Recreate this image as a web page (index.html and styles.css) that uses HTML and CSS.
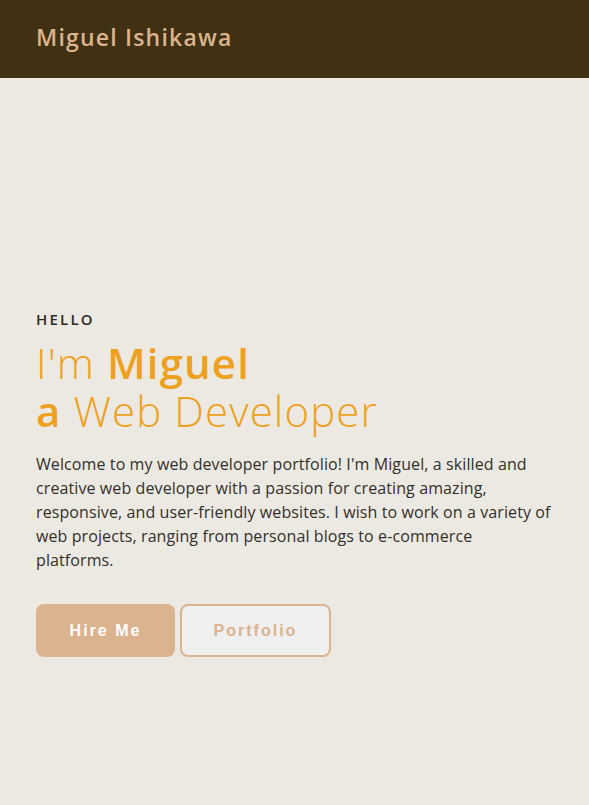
FILE: index.html
```html
<!DOCTYPE html>
<html lang="en">
<head>
<meta charset="utf-8">
<title>Miguel Ishikawa</title>
<link rel="stylesheet" href="styles.css">
</head>
<body>
<header class="site-header">
  <div class="brand">Miguel Ishikawa</div>
</header>
<main class="hero">
  <div class="hero-inner">
    <p class="eyebrow">HELLO</p>
    <h1 class="title"><span class="line">I'm <strong>Miguel</strong></span><span class="line"><strong>a</strong> Web Developer</span></h1>
    <p class="intro">Welcome to my web developer portfolio! I'm Miguel, a skilled and<br>creative web developer with a passion for creating amazing,<br>responsive, and user-friendly websites. I wish to work on a variety of<br>web projects, ranging from personal blogs to e-commerce<br>platforms.</p>
    <div class="actions">
      <button class="btn btn-primary">Hire Me</button>
      <button class="btn btn-outline">Portfolio</button>
    </div>
  </div>
</main>
</body>
</html>
```
FILE: styles.css
```css
html, body {
  margin: 0;
  padding: 0;
}
body {
  background: #ece9e2;
  font-family: "Open Sans", "Noto Sans", sans-serif;
  width: 589px;
  height: 805px;
  overflow: hidden;
}
.site-header {
  background: #403112;
  height: 78px;
  display: flex;
  align-items: center;
  padding: 0 36px;
}
.brand {
  color: #dcb38d;
  font-size: 23px;
  font-weight: 600;
  letter-spacing: 1.2px;
  margin-top: -4px;
}
.hero {
  padding: 0 10px 0 36px;
}
.hero-inner {
  padding-top: 231px;
}
.eyebrow {
  margin: 0;
  font-size: 15px;
  font-weight: 600;
  letter-spacing: 2.2px;
  color: #2f2a22;
  line-height: 20px;
}
.title {
  margin: 10px 0 0 0;
  color: #eea11e;
  font-size: 42px;
  line-height: 48px;
  font-weight: 300;
  letter-spacing: 1.1px;
}
.title .line {
  display: block;
  height: 48px;
  overflow: visible;
}
.title strong {
  font-weight: 600;
}
.intro {
  margin: 17px 0 0 0;
  color: #33302a;
  font-size: 16px;
  line-height: 24px;
  letter-spacing: 0.1px;
}
.actions {
  margin-top: 32px;
  display: flex;
  gap: 5px;
}
.btn {
  font-family: "Liberation Sans", Arial, sans-serif;
  font-size: 16px;
  font-weight: bold;
  letter-spacing: 2px;
  height: 53px;
  border-radius: 8px;
  cursor: pointer;
}
.btn-primary {
  width: 139px;
  background: #dbb38f;
  color: #ffffff;
  border: none;
}
.btn-outline {
  width: 151px;
  background: #efefef;
  color: #dbb38f;
  border: 2px solid #dbb38f;
}
```
